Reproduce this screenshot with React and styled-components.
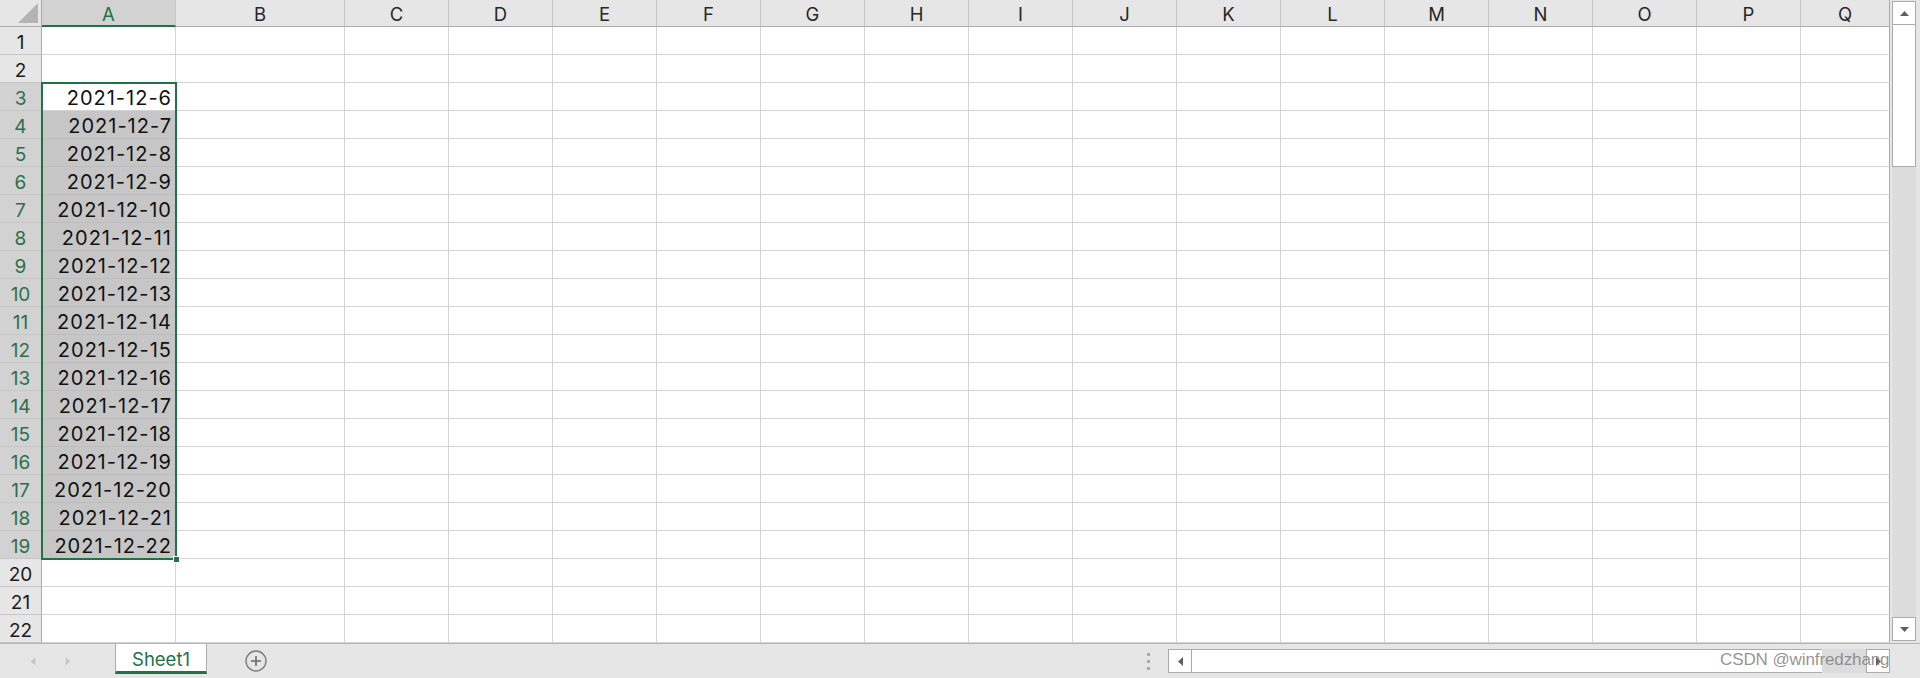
import React from 'react';
import styled, { createGlobalStyle } from 'styled-components';

const GREEN = '#217346';
const FONT = `Inter, "Noto Sans CJK SC", sans-serif`;

const GlobalStyle = createGlobalStyle`
  html, body { margin: 0; padding: 0; overflow: hidden; background: #e6e6e6; }
  * { box-sizing: border-box; }
`;

const Window = styled.div`
  width: 1920px;
  height: 678px;
  display: flex;
  flex-direction: column;
  position: relative;
  font-family: ${FONT};
  background: #e6e6e6;
`;

const SheetArea = styled.div`
  height: 644px;
  display: flex;
  border-bottom: 1px solid #b4b4b4;
`;

const Grid = styled.div`
  width: 1890px;
  position: relative;
  display: grid;
  grid-template-columns: 42px 134px 169px repeat(14, 104px) 1fr;
  grid-template-rows: 27px repeat(22, 28px);
  overflow: hidden;
  background: #fff;
`;

const Corner = styled.div`
  position: relative;
  background: #e6e6e6;
  border-right: 1px solid #ababab;
  border-bottom: 1px solid #ababab;
`;

const CornerTriangle = styled.svg`
  position: absolute;
  right: 3px;
  bottom: 3px;
`;

const ColHeader = styled.div`
  background: ${p => (p.$sel ? '#d2d2d2' : '#e6e6e6')};
  border-right: 1px solid ${p => (p.$last ? '#ababab' : '#c6c6c6')};
  border-bottom: ${p => (p.$sel ? `2px solid ${GREEN}` : '1px solid #ababab')};
  display: flex;
  align-items: center;
  justify-content: center;
  padding-top: ${p => (p.$sel ? '3px' : '2px')};
  font-size: 18.5px;
  color: ${p => (p.$sel ? GREEN : '#262626')};
`;

const RowHeader = styled.div`
  background: ${p => (p.$sel ? '#d2d2d2' : '#e6e6e6')};
  border-right: 1px solid #ababab;
  border-bottom: 1px solid #c6c6c6;
  display: flex;
  align-items: flex-end;
  justify-content: center;
  padding-bottom: 0;
  font-size: 19px;
  color: ${p => (p.$sel ? '#2f6e4a' : '#1a1a1a')};
`;

const Cell = styled.div`
  background: ${p => (p.$shade ? '#c6c6c6' : '#fff')};
  border-right: 1px solid ${p => (p.$last ? '#ababab' : '#d4d4d4')};
  border-bottom: 1px solid ${p => (p.$shade ? '#bdbdbd' : '#d4d4d4')};
  display: flex;
  align-items: flex-end;
  justify-content: flex-end;
  padding: 0 3px 0 0;
  font-size: 20px;
  line-height: 23px;
  letter-spacing: 1px;
  color: #111;
  white-space: nowrap;
`;

const Selection = styled.div`
  position: absolute;
  left: 41px;
  top: 82px;
  width: 136px;
  height: 478px;
  border: 2px solid ${GREEN};
  pointer-events: none;
`;

const FillHandle = styled.div`
  position: absolute;
  right: -5px;
  bottom: -5px;
  width: 7px;
  height: 7px;
  background: ${GREEN};
  border: 1px solid #fff;
`;

const VScroll = styled.div`
  flex: 1;
  display: flex;
  flex-direction: column;
  padding: 1px 4px 2px 2px;
  background: #e6e6e6;
`;

const VTrack = styled.div`
  flex: 1;
  display: flex;
  flex-direction: column;
  background: #dcdcdc;
`;

const ScrollButton = styled.div`
  width: 24px;
  height: 24px;
  flex: none;
  background: #fff;
  border: 1px solid #ababab;
  display: flex;
  align-items: center;
  justify-content: center;
`;

const VThumb = styled.div`
  height: 142px;
  background: #fff;
  border: 1px solid #ababab;
  border-top: none;
`;

const Spacer = styled.div`
  flex: 1;
`;

const BottomBar = styled.div`
  flex: 1;
  display: flex;
  align-items: flex-start;
  background: #e6e6e6;
`;

const NavArea = styled.div`
  width: 115px;
  height: 100%;
  display: flex;
  align-items: center;
  gap: 27px;
  padding-left: 29px;
`;

const Tab = styled.div`
  width: 92px;
  height: 30px;
  background: #fff;
  border-left: 1px solid #ababab;
  border-right: 1px solid #ababab;
  border-bottom: 3px solid ${GREEN};
  display: flex;
  align-items: center;
  justify-content: center;
  padding-top: 2px;
  color: ${GREEN};
  font-size: 18.5px;
`;

const AddButton = styled.div`
  margin-left: 38px;
  align-self: center;
  display: flex;
`;

const HScrollArea = styled.div`
  margin-left: auto;
  margin-right: 30px;
  height: 100%;
  display: flex;
  align-items: center;
`;

const Dots = styled.div`
  width: 3px;
  display: flex;
  flex-direction: column;
  gap: 4px;
  margin-right: 18px;
  & > span {
    width: 3px;
    height: 3px;
    background: #a8a8a8;
  }
`;

const HBox = styled.div`
  width: 722px;
  height: 24px;
  display: flex;
  background: #dcdcdc;
`;

const HThumb = styled.div`
  width: 630px;
  background: #fff;
  border-top: 1px solid #ababab;
  border-bottom: 1px solid #ababab;
`;

const Watermark = styled.div`
  position: absolute;
  left: 1720px;
  top: 650px;
  font-family: "Liberation Sans", sans-serif;
  font-size: 17px;
  color: rgba(120, 120, 120, 0.8);
  letter-spacing: -0.1px;
  pointer-events: none;
  white-space: nowrap;
`;

const COLS = 'ABCDEFGHIJKLMNOPQ'.split('');
const ROWS = Array.from({ length: 22 }, (_, i) => i + 1);

const Tri = ({ dir, color = '#606060', w = 9, h = 9 }) => {
  const pts = {
    up: '0,7 4.5,2 9,7',
    down: '0,2 4.5,7 9,2',
    left: '7,0 2,4.5 7,9',
    right: '2,0 7,4.5 2,9',
  }[dir];
  return (
    <svg width={w} height={h} viewBox="0 0 9 9">
      <polygon points={pts} fill={color} />
    </svg>
  );
};

export default function App() {
  return (
    <Window>
      <GlobalStyle />
      <SheetArea>
        <Grid>
          <Corner>
            <CornerTriangle width="20" height="20" viewBox="0 0 20 20">
              <polygon points="20,0 20,20 0,20" fill="#b4b4b4" />
            </CornerTriangle>
          </Corner>
          {COLS.map((c, i) => (
            <ColHeader key={c} $sel={c === 'A'} $last={i === COLS.length - 1}>
              {c}
            </ColHeader>
          ))}
          {ROWS.map(r => {
            const inSel = r >= 3 && r <= 19;
            return (
              <React.Fragment key={r}>
                <RowHeader $sel={inSel}>{r}</RowHeader>
                {COLS.map((c, i) => (
                  <Cell
                    key={c}
                    $shade={c === 'A' && r >= 4 && r <= 19}
                    $last={i === COLS.length - 1}
                  >
                    {c === 'A' && inSel ? `2021-12-${r + 3}` : ''}
                  </Cell>
                ))}
              </React.Fragment>
            );
          })}
          <Selection>
            <FillHandle />
          </Selection>
        </Grid>
        <VScroll>
          <ScrollButton>
            <Tri dir="up" />
          </ScrollButton>
          <VTrack>
            <VThumb />
            <Spacer />
          </VTrack>
          <ScrollButton>
            <Tri dir="down" />
          </ScrollButton>
        </VScroll>
      </SheetArea>
      <BottomBar>
        <NavArea>
          <Tri dir="left" color="#c4c4c4" w={8} h={11} />
          <Tri dir="right" color="#c4c4c4" w={8} h={11} />
        </NavArea>
        <Tab>Sheet1</Tab>
        <AddButton>
          <svg width="22" height="22" viewBox="0 0 22 22">
            <circle cx="11" cy="11" r="10" fill="none" stroke="#7a7a7a" strokeWidth="1.4" />
            <path d="M11 6v10M6 11h10" stroke="#6a6a6a" strokeWidth="1.6" />
          </svg>
        </AddButton>
        <HScrollArea>
          <Dots>
            <span />
            <span />
            <span />
          </Dots>
          <HBox>
            <ScrollButton>
              <Tri dir="left" />
            </ScrollButton>
            <HThumb />
            <Spacer />
            <ScrollButton>
              <Tri dir="right" />
            </ScrollButton>
          </HBox>
        </HScrollArea>
      </BottomBar>
      <Watermark>CSDN @winfredzhang</Watermark>
    </Window>
  );
}
